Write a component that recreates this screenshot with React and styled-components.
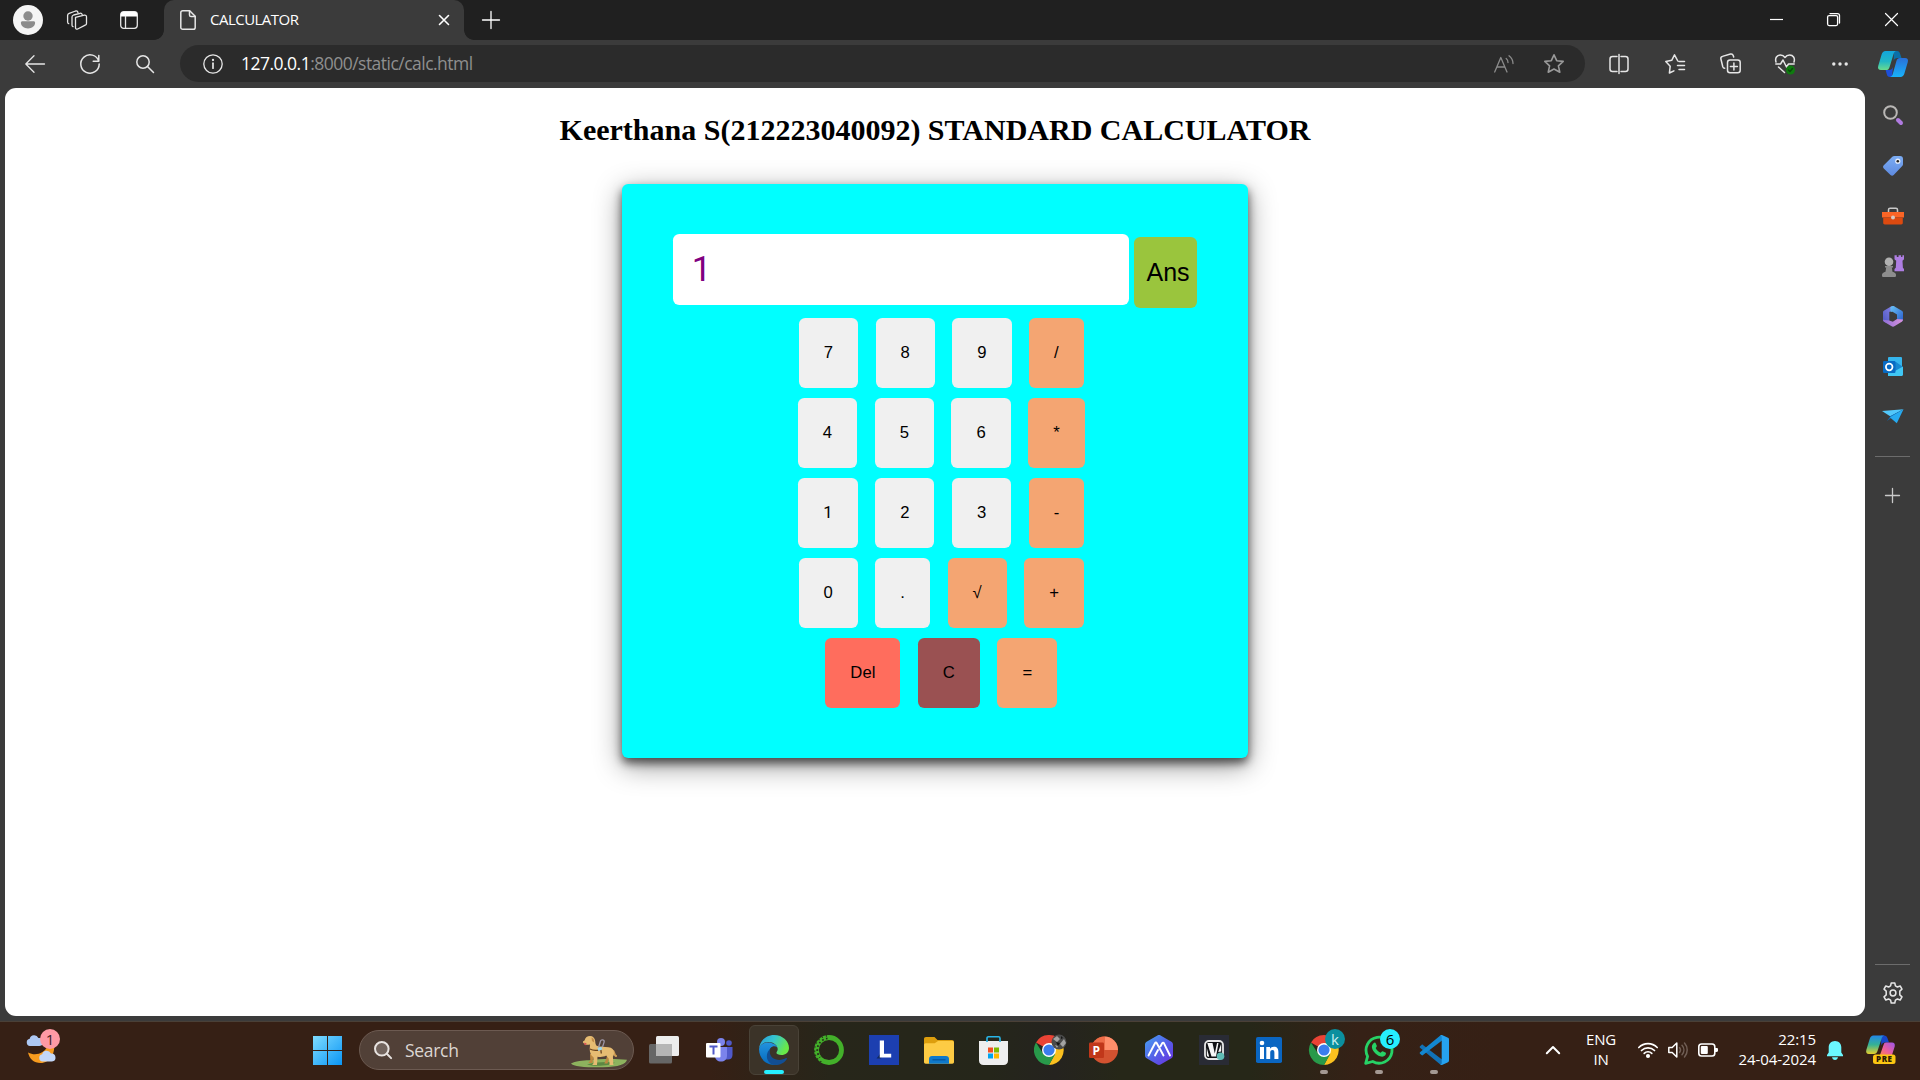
import React from "react";
import styled, { createGlobalStyle } from "styled-components";

const ui = '"Open Sans", "Noto Sans", sans-serif';

const Global = createGlobalStyle`
  html, body { margin: 0; padding: 0; background: #3b3b3b; overflow: hidden; }
  * { box-sizing: border-box; }
  button, input { font-family: "Liberation Sans", Arial, sans-serif; }
`;

const Desktop = styled.div`
  width: 1920px;
  height: 1080px;
  display: flex;
  flex-direction: column;
  background: #3b3b3b;
  font-family: ${ui};
  overflow: hidden;
`;

const Svg = styled.svg`
  display: block;
  flex: none;
  overflow: visible;
`;

const Slot = styled.div`
  width: ${(p) => p.$w}px;
  height: 100%;
  flex: none;
  display: flex;
  align-items: center;
  justify-content: center;
`;

const Spacer = styled.div`
  flex: 1;
`;

/* ---------- window chrome ---------- */

const TitleBar = styled.header`
  height: 40px;
  flex: none;
  display: flex;
  background: #202020;
  padding: 0 0 1px 3px;
`;

const Tab = styled.div`
  width: 300px;
  height: 40px;
  flex: none;
  margin-left: 8px;
  padding: 0 15px 0 16px;
  display: flex;
  align-items: center;
  background: #3b3b3b;
  border-radius: 10px 10px 0 0;
  position: relative;
  &::before,
  &::after {
    content: "";
    position: absolute;
    bottom: 0;
    width: 10px;
    height: 10px;
  }
  &::before {
    left: -10px;
    background: radial-gradient(circle at 0 0, #202020 9.5px, #3b3b3b 10.2px);
  }
  &::after {
    right: -10px;
    background: radial-gradient(circle at 100% 0, #202020 9.5px, #3b3b3b 10.2px);
  }
`;

const TabTitle = styled.span`
  flex: 1;
  margin-left: 14px;
  padding-bottom: 2px;
  font-size: 15px;
  line-height: 20px;
  letter-spacing: -0.52px;
  color: #fff;
`;

const Toolbar = styled.nav`
  height: 48px;
  flex: none;
  display: flex;
  align-items: center;
  padding: 0 0 1px 7px;
`;

const Omnibox = styled.div`
  width: 1405px;
  height: 37px;
  flex: none;
  margin-left: 5px;
  display: flex;
  align-items: center;
  background: #2b2b2b;
  border-radius: 19px;
  padding: 0 6px 0 18px;
`;

const Url = styled.span`
  margin-left: 13px;
  padding-bottom: 2px;
  font-size: 17.5px;
  line-height: 24px;
  letter-spacing: -0.52px;
  color: #8f8f8f;
  b {
    font-weight: 400;
    color: #fff;
  }
`;

/* ---------- page and side rail ---------- */

const Body = styled.div`
  height: 933px;
  flex: none;
  display: flex;
  padding-left: 5px;
`;

const Page = styled.main`
  width: 1860px;
  height: 928px;
  background: #fff;
  border-radius: 11px;
  display: flex;
  flex-direction: column;
  align-items: center;
`;

const Rail = styled.aside`
  width: 55px;
  height: 933px;
  padding-top: 2px;
  display: flex;
  flex-direction: column;
  align-items: center;
`;

const RailItem = styled.div`
  width: 55px;
  height: ${(p) => p.$h || 50.3}px;
  flex: none;
  display: flex;
  align-items: center;
  justify-content: center;
`;

const RailRule = styled.hr`
  width: 35px;
  height: 1px;
  flex: none;
  border: 0;
  margin: ${(p) => p.$m};
  background: #6c6c6c;
`;

const Heading = styled.h2`
  margin: 25px 0 0;
  height: 34px;
  font: bold 30px/34px "Liberation Serif", "Times New Roman", serif;
  color: #000;
  white-space: nowrap;
`;

const Calculator = styled.section`
  width: 626px;
  height: 574px;
  margin-top: 37px;
  padding: 50px;
  border-radius: 6.25px;
  background: #00ffff;
  box-shadow: 0 5px 10px rgba(0, 0, 0, 0.6), 0 7.5px 28px rgba(0, 0, 0, 0.42);
`;

const Display = styled.div`
  height: 79px;
  display: flex;
  padding-left: 1px;
  gap: 5px;
`;

const Screen = styled.input`
  width: 456px;
  height: 71px;
  border: 0;
  outline: 0;
  padding: 0 18.75px;
  border-radius: 6.25px;
  background: #fff;
  color: #800080;
  font-family: Roboto, "Liberation Sans", sans-serif;
  font-size: 35px;
`;

const AnsKey = styled.button`
  width: 63px;
  height: 71px;
  flex: none;
  margin-top: 3px;
  border: 0;
  border-radius: 6.25px;
  padding: 0 0 0 12.5px;
  background: #9ac53d;
  color: #000;
  font-size: 25px;
  text-align: left;
`;

const KeyRow = styled.div`
  display: flex;
  justify-content: center;
  gap: 5px;
  margin-top: ${(p) => (p.$first ? 5 : 10)}px;
`;

const tones = {
  plain: "#f0f0f0",
  op: "#f4a572",
  del: "#ff6d5d",
  clear: "#9a5152",
};

const Key = styled.button`
  height: 70px;
  margin: 0 0 0 12.5px;
  padding: 0 25px;
  border: 0;
  border-radius: 6.25px;
  background: ${(p) => tones[p.$tone]};
  color: #000;
  font-family: ${(p) => (p.$one ? 'Roboto, "Liberation Sans", sans-serif' : '"Liberation Sans", Arial, sans-serif')};
  font-size: 16.67px;
  line-height: 20px;
`;

/* ---------- taskbar ---------- */

const Taskbar = styled.footer`
  height: 59px;
  flex: none;
  display: flex;
  align-items: center;
  padding-bottom: 2px;
  border-top: 1px solid #4a4037;
  background: linear-gradient(
    90deg,
    #362015 0,
    #362015 710px,
    #27261a 830px,
    #25261a 990px,
    #25231f 1055px,
    #262718 1120px,
    #262718 1250px,
    #352116 1360px,
    #362015 1500px
  );
`;

const SearchPill = styled.div`
  width: 275px;
  height: 40px;
  flex: none;
  margin-left: 7px;
  padding: 0 6px 0 14px;
  display: flex;
  align-items: center;
  border: 1px solid #6c5a51;
  border-radius: 20px;
  background: #514037;
`;

const SearchLabel = styled.span`
  flex: 1;
  margin-left: 13px;
  font-size: 17.5px;
  letter-spacing: -0.3px;
  color: #dcd6d2;
`;

const Apps = styled.div`
  display: flex;
  gap: 5px;
  margin-left: 5px;
`;

const AppButton = styled.div`
  width: 50px;
  height: 50px;
  flex: none;
  display: flex;
  align-items: center;
  justify-content: center;
  position: relative;
  border-radius: 6px;
  border: 1px solid ${(p) => (p.$active ? "#494237" : "transparent")};
  background: ${(p) => (p.$active ? "#3b3328" : "transparent")};
  &::after {
    content: "";
    display: ${(p) => (p.$active || p.$open ? "block" : "none")};
    position: absolute;
    bottom: 0;
    width: ${(p) => (p.$active ? 20 : 8)}px;
    height: 4px;
    border-radius: 2px;
    background: ${(p) => (p.$active ? "#26efff" : "#a49993")};
  }
`;

const Badge = styled.span`
  position: absolute;
  left: 25px;
  top: 3px;
  width: 20px;
  height: 20px;
  border-radius: 50%;
  display: flex;
  align-items: center;
  justify-content: center;
  font-size: 15px;
  line-height: 20px;
  color: ${(p) => p.$fg};
  background: ${(p) => p.$bg};
`;

const Weather = styled.div`
  width: 50px;
  height: 50px;
  margin-left: 17px;
  flex: none;
  position: relative;
  display: flex;
  align-items: center;
  justify-content: center;
`;

const WeatherBadge = styled(Badge)`
  left: 23px;
  top: 4px;
`;

const TrayText = styled.div`
  width: ${(p) => p.$w}px;
  flex: none;
  padding-bottom: 3px;
  font-size: 15px;
  line-height: 20px;
  letter-spacing: ${(p) => p.$ls}px;
  text-align: ${(p) => p.$align};
  color: #fff;
  white-space: nowrap;
`;

const line = { fill: "none", stroke: "#e6e6e6", strokeWidth: 1.3, strokeLinecap: "round", strokeLinejoin: "round" };

const Icon = ({ w = 30, h = w, children, ...rest }) => (
  <Svg width={w} height={h} viewBox={`0 0 ${w} ${h}`} {...rest}>
    {children}
  </Svg>
);

const Avatar = () => (
  <Icon w={30}>
    <circle cx="15" cy="15" r="15" fill="#f5f5f5" />
    <circle cx="15" cy="11" r="4.7" fill="#8c8c8c" />
    <path d="M9.5 16.2h11c1 0 1.6.7 1.6 1.6 0 3.4-3.2 5.6-7.1 5.6s-7.1-2.2-7.1-5.6c0-.9.6-1.6 1.6-1.6z" fill="#8c8c8c" />
  </Icon>
);

const Workspaces = () => (
  <Icon w={22} {...line}>
    <path d="M9.5 8.3l8.8-2.1c1.3-.3 2.2.4 2.2 1.5v6.800c0 .8-.5 1.500-1.300 1.700l-7.500 3.800c-1.200.5-2.200 0-2.200-1.200z" />
    <path d="M16.200 5.700c-.2-1.200-1-1.700-2.100-1.400L7.600 6c-1 .3-1.600 1-1.600 2v8.200c0 .8.4 1.300 1 1.500" />
    <path d="M12 3.600C11.600 2 10.800 1.700 9.600 2L3.200 4.400C2.200 4.800 1.600 5.500 1.600 6.500V13c0 .9.4 1.500 1.100 1.700" />
  </Icon>
);

const TabPane = () => (
  <Icon w={18}>
    <rect x=".7" y=".7" width="16.6" height="16.6" rx="3" {...line} />
    <path d="M.7 5.600V3.700a3 3 0 0 1 3-3h10.600a3 3 0 0 1 3 3v1.900z" fill="#fff" />
    <path d="M5.500 5.500v11.800" {...line} />
  </Icon>
);

const DocIcon = () => (
  <Icon w={16} h={20} {...line} strokeWidth="1.5">
    <path d="M2.800.8h6.900l5.500 5.400v11.200c0 1.100-.7 1.800-1.800 1.800H2.800C1.600 19.200.8 18.500.8 17.400V2.600C.8 1.500 1.600.8 2.800.8z" />
    <path d="M9.500 1v3.900c0 1 .6 1.600 1.600 1.600H15" />
  </Icon>
);

const Cross = ({ w, sw = 1.4 }) => (
  <Icon w={w} {...line} stroke="#fff" strokeWidth={sw}>
    <path d={`M.5.5L${w - 0.5} ${w - 0.5}M${w - 0.5}.5L.5 ${w - 0.5}`} />
  </Icon>
);

const Plus = ({ w, color = "#fff" }) => (
  <Icon w={w} {...line} stroke={color} strokeWidth="1.3">
    <path d={`M${w / 2} .5V${w - 0.5}M.5 ${w / 2}H${w - 0.5}`} />
  </Icon>
);

const Gear = () => (
  <Icon w={22} {...line} strokeWidth="1.5">
    <path d="M9.200 1h3.600l.6 2.900 2 1.100 2.800-1 1.800 3.100-2.200 2v3.800l2.200 2-1.800 3.100-2.800-1-2 1.100-.6 2.900H9.200L8.600 18.100l-2-1.100-2.800 1L2 14.900l2.200-2V9.100L2 7.100 3.800 4l2.800 1 2-1.100z" />
    <circle cx="11" cy="11" r="2.900" />
  </Icon>
);

const Copilot = () => (
  <Icon w={30} h={26}>
    <defs>
      <linearGradient id="copilotLeft" x1="0" y1="0" x2="0" y2="1">
        <stop offset="0" stopColor="#12a5dd" />
        <stop offset=".55" stopColor="#22b7c5" />
        <stop offset="1" stopColor="#6bdc8c" />
      </linearGradient>
      <linearGradient id="copilotRight" x1="0" y1="0" x2="0" y2="1">
        <stop offset="0" stopColor="#2a70d8" />
        <stop offset="1" stopColor="#18b2fa" />
      </linearGradient>
    </defs>
    <path d="M16 0h3.200c1.600 0 2.300 1 2.800 2.600L23.500 7h-4c-2 0-3.200.8-3.900 2.900z" fill="#0a6fa8" />
    <path d="M14 26h-2c-2 0-2.700-1-3.200-2.700L7.600 19h3.600c2 0 3.200-1 3.800-2.900z" fill="#1d4fd8" />
    <path d="M7.500 0h11c-1.700.2-2.500 1.500-3 3.200l-4 13c-.6 2-1.700 2.900-3.500 2.900H3C.6 19.100-.5 17.600.2 15L3.600 3.500C4.300 1.200 5.500 0 7.500 0z" fill="url(#copilotLeft)" />
    <path d="M22 7h5c2.400 0 3.500 1.600 2.800 4L26.400 22.500C25.700 24.800 24.500 26 22.500 26H12c1.600-.2 2.300-1.500 2.800-3.200l3.700-13C19.100 7.900 20.200 7 22 7z" fill="url(#copilotRight)" />
  </Icon>
);

const CopilotPre = () => (
  <Icon w={30}>
    <defs>
      <linearGradient id="preLeft" x1="0" y1="0" x2="0" y2="1">
        <stop offset="0" stopColor="#2387e8" />
        <stop offset=".5" stopColor="#35b294" />
        <stop offset="1" stopColor="#e6cf2c" />
      </linearGradient>
      <linearGradient id="preRight" x1="1" y1="0" x2="0" y2="1">
        <stop offset="0" stopColor="#9b55ea" />
        <stop offset=".6" stopColor="#ed5f9b" />
        <stop offset="1" stopColor="#f98452" />
      </linearGradient>
    </defs>
    <path d="M15 .5h3c2 0 3 1 3.600 3L23 7.500h-4c-2 0-3 1-3.700 3z" fill="#1746c8" />
    <path d="M7.500.5h11c-2 .2-2.500 2-3 3.500l-4 12c-.6 2-1.700 3-3.500 3H3c-2.300 0-3.300-1.500-2.700-4L3.700 4C4.400 1.700 5.500.5 7.500.5z" fill="url(#preLeft)" />
    <path d="M20 7.500h6c2.200 0 3.300 1.600 2.700 4L26 20H14l3.500-10c.5-1.700 1.200-2.500 2.500-2.500z" fill="url(#preRight)" />
    <rect x="7" y="19.500" width="22.500" height="9.500" rx="2.500" fill="#fcc612" />
    <text x="18.300" y="27.300" textAnchor="middle" fontFamily="Open Sans, sans-serif" fontWeight="800" fontSize="8" letterSpacing=".5" fill="#2a1a05">PRE</text>
  </Icon>
);

const Chrome = () => (
  <Icon w={30}>
    <path d="M15 15L2 7.500A15 15 0 0 1 28 7.500L15 8z" fill="#ea4335" />
    <path d="M15 8h13A15 15 0 0 1 15 30l6-11z" fill="#fbc01f" />
    <path d="M2 7.500A15 15 0 0 0 15 30l6.200-11L9 18.500z" fill="#28994a" />
    <circle cx="15" cy="15" r="7" fill="#fff" />
    <circle cx="15" cy="15" r="5.600" fill="#3b7ded" />
  </Icon>
);

const SearchTool = () => (
  <Icon w={20}>
    <circle cx="7.500" cy="7.500" r="6.300" fill="none" stroke="#b9b7b5" strokeWidth="2" />
    <path d="M15 15l3 3" stroke="#b07be0" strokeWidth="4" strokeLinecap="round" />
  </Icon>
);

const ShoppingTag = () => (
  <Icon w={20} h={19}>
    <defs>
      <linearGradient id="tag" x1="0" y1="0" x2="0" y2="1"><stop offset="0" stopColor="#7cadf4" /><stop offset="1" stopColor="#5e8ae0" /></linearGradient>
    </defs>
    <path d="M11.500 0H17c2 0 3 1 3 3v5c0 1-.3 1.600-1 2.300l-8.300 8.600c-1 1-2.200 1-3.200 0L.8 12.500c-1-1-1-2.200 0-3.200L9.300.8c.6-.6 1.200-.8 2.200-.8z" fill="url(#tag)" />
    <circle cx="14.800" cy="5.200" r="2.600" fill="#e8eefb" />
    <circle cx="14.800" cy="5.200" r="1.300" fill="#222" />
  </Icon>
);

const Toolbox = () => (
  <Icon w={22} h={17}>
    <path d="M6.500 5V2.800c0-1 .7-1.600 1.600-1.600h5.800c1 0 1.600.6 1.600 1.600V5" fill="none" stroke="#c9c9c9" strokeWidth="1.500" />
    <path d="M0 5h22v5.500H0z" fill="#fa6526" />
    <path d="M1.200 10.500h19.600v5.300c0 1-.6 1.700-1.600 1.700H2.800c-1 0-1.600-.7-1.600-1.700z" fill="#dc4a10" />
    <circle cx="11" cy="10.500" r="2" fill="#d7c9c1" />
  </Icon>
);

const Games = () => (
  <Icon w={22}>
    <path d="M12.500.3h2.300v1.700h1.700V.3h2.600v1.700h1.300V.3H22v4l-1.500 1.500.4 7L22 14v2.200h-9.500V14l1.300-1.200.4-7-1.700-1.500z" fill="#ae7ee2" />
    <circle cx="7" cy="6.800" r="4.300" fill="#b0b0b0" />
    <path d="M3 11h8v1.600H9.800l.7 4.200c2 .6 3.500 1.600 3.500 3v.7c0 1-.6 1.500-1.500 1.500h-11C.6 22 0 21.500 0 20.500v-.7c0-1.400 1.500-2.400 3.500-3l.7-4.200H3z" fill="#8d8d8d" />
  </Icon>
);

const Microsoft365 = () => (
  <Icon w={20} h={21}>
    <defs>
      <linearGradient id="m1" x1="1" y1="0" x2="0" y2="1"><stop offset="0" stopColor="#8d86ea" /><stop offset="1" stopColor="#4c57c0" /></linearGradient>
      <linearGradient id="m2" x1="0" y1="0" x2="1" y2="1"><stop offset="0" stopColor="#68c4f6" /><stop offset="1" stopColor="#2a5ccc" /></linearGradient>
      <linearGradient id="m3" x1="0" y1="0" x2="1" y2="0"><stop offset="0" stopColor="#8f6fd8" /><stop offset="1" stopColor="#d892dc" /></linearGradient>
    </defs>
    <path d="M8 .6C9 0 10.500 0 11.500.5L9 4.500 6.300 6v9.300L3.500 17 1 15.500C.3 15 0 14.500 0 13.500v-7C0 5.500.3 5 1.200 4.500z" fill="url(#m1)" />
    <path d="M9.500 0c.8 0 1.500.1 2 .5l7.300 4.300c.8.5 1.200 1 1.200 2V14l-1 1.500-5-2.800V8.500L9.500 5.800 7.500 6V1z" fill="url(#m2)" />
    <path d="M20 13.500c0 1-.4 1.700-1.200 2.200l-7 4.400c-1.200.7-2.400.7-3.600 0L1 15.700c-.6-.4-1-1.200-1-2l6.300.7 3.500 1.400 4.200-2.800z" fill="url(#m3)" />
  </Icon>
);

const Outlook = () => (
  <Icon w={20} h={19}>
    <rect x="5" width="14" height="10" rx="1" fill="#35b5ed" />
    <path d="M5 9l8-4 7 5v8H5z" fill="#1788d1" />
    <path d="M12 14l8-4.500v8c0 .9-.6 1.500-1.500 1.500H5v-4z" fill="#40c7f4" />
    <rect y="4" width="12.500" height="12" rx="1.200" fill="#086bc4" />
    <circle cx="6.200" cy="10" r="3.300" fill="none" stroke="#fff" strokeWidth="1.700" />
  </Icon>
);

const Drop = () => (
  <Icon w={22} h={15}>
    <path d="M0 2L21.500.3 8.500 7.500z" fill="#52c8fb" />
    <path d="M8.500 7L21.500.3 5 12z" fill="#0f66b0" />
    <path d="M21.500.3l-6.700 14-7-6z" fill="#27aaf0" />
  </Icon>
);

const railIcons = [SearchTool, ShoppingTag, Toolbox, Games, Microsoft365, Outlook, Drop];

const rows = [
  [["7"], ["8"], ["9"], ["/", "op"]],
  [["4"], ["5"], ["6"], ["*", "op"]],
  [["1"], ["2"], ["3"], ["-", "op"]],
  [["0"], ["."], ["√", "op"], ["+", "op"]],
  [["Del", "del"], ["C", "clear"], ["=", "op"]],
];

const TaskView = () => (
  <Icon w={30} h={28}>
    <rect y="8" width="23" height="19.500" rx="1.500" fill="#666" />
    <rect x="7" width="23" height="20" rx="1.500" fill="#ededed" />
    <path d="M7 8h16v12H7z" fill="#b5b5b5" />
  </Icon>
);

const Teams = () => (
  <Icon w={27} h={24}>
    <circle cx="23" cy="5" r="2.800" fill="#5059c9" />
    <circle cx="15" cy="4" r="4" fill="#7b83eb" />
    <path d="M19 9h7.500v8c0 3-2 4.500-4.500 4.500h-3z" fill="#5059c9" />
    <path d="M9 9h12v8.500c0 4-2.600 6-6 6s-6-2-6-6z" fill="#7b83eb" />
    <rect y="5" width="14.500" height="14.500" rx="1" fill="#fff" />
    <path d="M3.500 8.500h8M7.500 8.500v8" stroke="#5059c9" strokeWidth="2" />
  </Icon>
);

const Edge = () => (
  <Icon w={30}>
    <defs>
      <linearGradient id="eg1" x1="0" y1="0" x2="1" y2=".4"><stop offset="0" stopColor="#279ae0" /><stop offset=".5" stopColor="#35c5cf" /><stop offset="1" stopColor="#69e848" /></linearGradient>
      <linearGradient id="eg2" x1="0" y1="0" x2="0" y2="1"><stop offset="0" stopColor="#2293df" /><stop offset="1" stopColor="#0669bd" /></linearGradient>
    </defs>
    <path d="M0 14C.6 6 7 0 15 0c9 0 15 6.500 15 13 0 4.600-3.600 7-7.500 7-3.400 0-5.400-1.200-5-2.600.3-.9 1.200-1.500 1.200-3.400C18.700 10.500 14.500 7 9.500 7 4.500 7 1 10 0 14z" fill="url(#eg1)" />
    <path d="M0 14c.8-4 4.500-6.500 9-6.500 4.800 0 8.500 2.500 9.500 5-1.400-1-3.200-1.400-4.700-1-3 .9-4.300 4.400-3.300 8.500 1 4.500 4.500 8 8 9.500C9.500 31.500 0 25 0 14z" fill="url(#eg2)" />
    <path d="M11.300 14c-1.200 3.500-.2 8.500 5.200 10.300 4 1.300 8 .2 10.500-1.200.7-.4 1.200.2.8.8-2.500 4-6.700 6.100-11.300 6.100-5.500 0-9.500-5-8.500-10.500.4-2.400 1.600-4.300 3.300-5.500z" fill="#124e93" />
  </Icon>
);

const Anaconda = () => (
  <Icon w={30}>
    <circle cx="15" cy="15" r="12.500" fill="none" stroke="#43b02a" strokeWidth="4.800" />
    <path d="M13 .8A14.300 14.300 0 0 0 7.500 27.200" fill="none" stroke="#26271a" strokeWidth="1.300" strokeDasharray="1.200 3" />
    <path d="M13.500 3.400A11.700 11.700 0 0 0 6 22.500" fill="none" stroke="#26271a" strokeWidth="1.800" strokeDasharray="1.600 2.400" />
  </Icon>
);

const LApp = () => (
  <Icon w={30}>
    <path d="M0 0h30v30H0z" fill="#1c3fb0" />
    <path d="M11 6v13l-3.500 4.500H12l1-2z" fill="#122a62" />
    <path d="M10.800 5.500h4.200v13.300h7.200v3.700H10.800z" fill="#fff" />
  </Icon>
);

const Folder = () => (
  <Icon w={30} h={27}>
    <path d="M0 2C0 .7.700 0 2 0h8.500l3 3H28c1.200 0 2 .8 2 2v8H0z" fill="#dd9e0d" />
    <path d="M0 8c0-1 .7-1.700 1.700-1.700h9L14 4h14.300C29.300 4 30 4.700 30 5.700V25c0 1-.7 1.700-1.700 1.700H1.700C.7 26.700 0 26 0 25z" fill="#fdcb44" />
    <path d="M5 26.700V22c0-1.800 1.200-3 3-3h14c1.800 0 3 1.200 3 3v4.700z" fill="#0f79cb" />
    <path d="M8.500 22.800h13" stroke="#07539a" strokeWidth="1.200" />
  </Icon>
);

const Store = () => (
  <Icon w={30} h={29}>
    <path d="M0 5h29v19.500c0 2.800-1.700 4.500-4.500 4.500h-20C1.700 29 0 27.300 0 24.500z" fill="#eee" />
    <path d="M8 6V2.200C8 1.200 8.600.7 9.500.7h10c.9 0 1.500.5 1.500 1.500V6" fill="none" stroke="#29b6e8" strokeWidth="1.600" />
    <path d="M9 11.500h5v5H9z" fill="#f25022" /><path d="M15 11.500h5v5h-5z" fill="#7fba00" />
    <path d="M9 17.500h5v5H9z" fill="#00a4ef" /><path d="M15 17.500h5v5h-5z" fill="#ffb900" />
  </Icon>
);

const ChromePhoto = () => (
  <Icon w={30}>
    <svg width="30" height="30"><Chrome /></svg>
    <circle cx="25" cy="7" r="7.500" fill="#4b4b4b" />
    <path d="M19 4l4-3 3 3-3 3zM26 9l4-5 2 4-3 4zM21 10l3 1-1 2z" fill="#a3a3a3" />
    <path d="M22 7l4 1-2 3zM27 1l2 2-2 1z" fill="#151515" />
  </Icon>
);

const PowerPoint = () => (
  <Icon w={30} h={28}>
    <circle cx="15.500" cy="14" r="13.500" fill="#d35230" />
    <path d="M15.500 .5A13.500 13.500 0 0 1 29 14H15.500z" fill="#ff8f6b" />
    <path d="M15.500 .5V14H2A13.500 13.500 0 0 1 15.500 .5z" fill="#ed6c47" />
    <rect x="0" y="6.500" width="15" height="15.500" rx="1.300" fill="#c0371a" />
    <text x="7.300" y="18.500" textAnchor="middle" fontFamily="Open Sans, sans-serif" fontWeight="700" fontSize="12" fill="#fff">P</text>
  </Icon>
);

const HexApp = () => (
  <Icon w={28} h={30}>
    <defs><linearGradient id="hx" x1="0" y1="0" x2="1" y2="1"><stop offset="0" stopColor="#46a3f2" /><stop offset=".5" stopColor="#5462e8" /><stop offset="1" stopColor="#6a2fe0" /></linearGradient></defs>
    <path d="M12.400.5c1-.6 2.200-.6 3.200 0l10.800 6.200c1 .6 1.600 1.600 1.600 2.800v11c0 1.200-.6 2.200-1.600 2.800l-10.800 6.200c-1 .6-2.200.6-3.200 0L1.600 23.300C.6 22.700 0 21.700 0 20.500v-11c0-1.200.6-2.200 1.600-2.800z" fill="url(#hx)" />
    <path d="M3.500 20.500L10 8.200c.5-.9 1.300-.9 1.800 0L18.500 20.500M10 20.500l3-5.500M15.500 11.300l1.700-3c.5-.9 1.300-.9 1.800 0L25 20.500" fill="none" stroke="#fff" strokeWidth="1.900" strokeLinecap="round" strokeLinejoin="round" />
  </Icon>
);

const VApp = () => (
  <Icon w={30}>
    <path d="M0 0h30v30H0z" fill="#292b35" />
    <rect x="6" y="6" width="18" height="18" rx="4" fill="#101114" stroke="#e7e7e7" strokeWidth="1.800" />
    <path d="M8.300 8h5.200l2.300 10.500L18 8h1.500L17 21.500h-4.500z" fill="#f6f6f6" />
    <path d="M7.800 13l2.400 8.800H9.600c-1.100 0-1.800-.6-1.800-1.700zM22.200 8.500v8l-3 .5z" fill="#f6f6f6" />
    <circle cx="21.500" cy="21.200" r="3.800" fill="#5fbcb5" />
  </Icon>
);

const LinkedIn = () => (
  <Icon w={26}>
    <rect width="26" height="26" rx="1.800" fill="#0a66c2" />
    <circle cx="6" cy="6" r="2.300" fill="#fff" />
    <path d="M4 10h4v12H4zM10.300 10h3.700v1.700c.8-1.300 2-2 3.900-2 3.300 0 4.500 2 4.500 5.600V22h-4v-6c0-1.900-.4-3-1.900-3-1.700 0-2.300 1.200-2.300 3v6h-3.900z" fill="#fff" />
  </Icon>
);

const WhatsApp = () => (
  <Icon w={30}>
    <path d="M1.700 28.300l1.900-7A13 13 0 1 1 8.700 26.500z" fill="none" stroke="#27d266" strokeWidth="2.800" strokeLinejoin="round" />
    <path d="M9.500 8.200c1-.9 1.900-.8 2.300.2l1 2.400c.3.700-.7 1.600-1.100 2.200.8 2 2.800 3.800 5 4.800.6-.5 1.400-1.700 2-1.500l2.700 1.300c.7.400.7 1.100.3 2-1 2-3.300 2.500-5.700 1.700-4-1.300-7.800-5.500-8.100-9-.1-1.600.5-3 1.600-4.100z" fill="#27d266" />
  </Icon>
);

const VSCode = () => (
  <Icon w={30}>
    <path d="M1 11.300l1.500-1.400c.5-.4 1-.4 1.500 0L23 24.500V30c-.8 0-1.500-.3-2-.8L1 12.700c-.5-.5-.5-1 0-1.400z" fill="#1272b7" />
    <path d="M1 18.700l1.500 1.400c.5.400 1 .4 1.500 0L23 5.500V0c-.8 0-1.500.3-2 .8L1 17.300c-.5.500-.5 1 0 1.400z" fill="#1387d0" />
    <path d="M21 .8c.7-.8 1.500-1 2.500-.6L29 2.800c.7.300 1 .8 1 1.600v21.200c0 .8-.3 1.300-1 1.600l-5.500 2.600c-1 .4-1.800.2-2.500-.6.900.4 1.700 0 1.700-1.200V2C22.700.8 21.900.4 21 .8z" fill="#26a2f0" />
  </Icon>
);

const Dog = () => (
  <Icon w={56} h={40}>
    <path d="M0 33.500c4-2.500 12-3.300 18-3.300 12-1.600 27-1.600 38-.4-1 4.200-8 7.300-24 7.500-16 .2-30-.5-32-3.800z" fill="#8db35e" />
    <path d="M16 34.500c10-2.500 20-3 28-1.800-4 2.600-20 4.300-28 1.800z" fill="#5d8843" />
    <path d="M41.500 20.500c2.600 1 1 4.300 3.500 5.500" fill="none" stroke="#d09e55" strokeWidth="2" strokeLinecap="round" />
    <path d="M36.500 24.500l2 2.500-2 6.500h-3.200l1.700-4zM19 24h3.500l-1 9h-4.200l2-2.500z" fill="#bd8940" />
    <path d="M12 12.500c-.4-1 .4-1.600 1.500-2.100C14.300 7.500 16.300 6 19 6c3 0 4.900 2 5.200 5 .1 2 .4 3.600 1.400 4.800 3 1.400 8 1 11.900 1.500 3.500.4 5.500 2.500 5.500 6 0 1.500-.5 2.500-1.100 3.500l.5 8.200h-4l.2-2-1-4.500-2.400-3c-2.500 1.500-5.700 1.700-8.700 1.200L26 35h-4.800l1.600-2.300-.6-5.700c-2.200-1.300-3.500-4.500-3.500-8l.3-4.500c-2.500.6-5.500.5-7-2z" fill="#e6bc72" />
    <path d="M20.500 7.500c2 .5 3 2.500 2.600 5L21 11z" fill="#c08c4a" />
    <path d="M18.800 19c3 1.500 6.500 1.700 9.400.8M29.500 17l.8 6.500" fill="none" stroke="#694420" strokeWidth="1.300" />
    <path d="M27.500 17.500l2-6.500c.8-2 4.200-1.200 3.600 1.100L31.500 17" fill="none" stroke="#9c95a5" strokeWidth="1.300" />
    <path d="M26.500 18l4-1.500.8 3-4 1.500z" fill="#9dd5ea" />
    <path d="M13 12.800l2.500.2-.5 2.300-1.600-.5z" fill="#d85858" />
  </Icon>
);

const cloudShape = "M4 11a3.700 3.700 0 0 1-.3-7.300A4.600 4.600 0 0 1 12.400 3 4 4 0 0 1 13.500 11z";

const WeatherIcon = () => (
  <Icon w={32} h={30}>
    <path d="M28 8c1.500 10-3.500 20-13.500 20C8 28 3.500 24 2 17.500c5 2.500 10 2.300 14.500-.5C20.500 14.500 22 11 22 8z" fill="#f79b1e" />
    <path d={cloudShape} fill="#adc8f3" />
    <path d={cloudShape} fill="#c3d7f8" transform="translate(12.500 15.500)" />
  </Icon>
);

export default function App() {
  return (
    <Desktop>
      <Global />
      <TitleBar>
        <Slot $w={50}><Avatar /></Slot>
        <Slot $w={48}><Workspaces /></Slot>
        <Slot $w={55}><TabPane /></Slot>
        <Tab>
          <DocIcon />
          <TabTitle>CALCULATOR</TabTitle>
          <Cross w={10} sw={1.6} />
        </Tab>
        <Slot $w={53}><Plus w={18} /></Slot>
        <Spacer />
        <Slot $w={58}><Icon w={13}><path d="M0 6.500h13" stroke="#fff" strokeWidth="1.2" /></Icon></Slot>
        <Slot $w={57}>
          <Icon w={13} {...line} stroke="#fff">
            <rect x=".6" y="2.600" width="10" height="10" rx="1.500" />
            <path d="M3 .6h7.500c1.300 0 2 .8 2 2V10" />
          </Icon>
        </Slot>
        <Slot $w={58}><Cross w={13} sw={1.2} /></Slot>
      </TitleBar>

      <Toolbar>
        <Slot $w={56}><Icon w={20} h={18} {...line}><path d="M19.500 9H.8M9 .8L.8 9 9 17.200" /></Icon></Slot>
        <Slot $w={54}>
          <Icon w={20} {...line} strokeWidth="1.5">
            <path d="M18.800 7.300A9.200 9.200 0 1 0 19.200 10M18.800 1.500v5.800h-5.600" />
          </Icon>
        </Slot>
        <Slot $w={56}><Icon w={18} {...line} strokeWidth="1.5"><circle cx="7" cy="7" r="6.200" /><path d="M11.500 11.500l6 6" /></Icon></Slot>
        <Slot $w={2} />
        <Omnibox>
          <Slot $w={30}>
            <Icon w={20} {...line}><circle cx="10" cy="10" r="9.200" /><path d="M10 9.200v5" strokeWidth="1.7" /><circle cx="10" cy="6" r=".5" fill="#fff" /></Icon>
          </Slot>
          <Url><b>127.0.0.1</b>:8000/static/calc.html</Url>
          <Spacer />
          <Slot $w={50}>
            <Icon w={20} h={18} {...line} stroke="#8b8b8b">
              <path d="M.7 17L6.800 2.500 13 17M2.800 12h8M12.200 3.500c1.300 1 1.800 2.300 1.800 4M15 .8c2.700 2.200 4 4.500 4 7.700" />
            </Icon>
          </Slot>
          <Slot $w={50}><Icon w={20} h={19} {...line} stroke="#9a9a9a" strokeWidth="1.6"><path d="M10 .8l2.700 5.900 6.500.7-4.800 4.400 1.400 6.400-5.800-3.200-5.800 3.200 1.400-6.400L.8 7.400l6.500-.7z" /></Icon></Slot>
        </Omnibox>
        <Slot $w={68}>
          <Icon w={20} {...line} strokeWidth="1.5"><path d="M8 2.500H3.500C2 2.500 1 3.500 1 5v10c0 1.500 1 2.500 2.500 2.500H8M12 2.500h4.500C18 2.500 19 3.500 19 5v10c0 1.500-1 2.500-2.500 2.500H12M10 .5v19" /></Icon>
        </Slot>
        <Slot $w={43}>
          <Icon w={20} {...line} strokeWidth="1.5"><path d="M12.800 7L9.500.8 6.700 6.300.8 7.500l4.400 4.700-.8 6.800 4.500-2.200M14 7.500h5.500M12.500 11.500h7M14 15.500h5.500" /></Icon>
        </Slot>
        <Slot $w={68}>
          <Icon w={21} {...line} strokeWidth="1.5"><rect x="7.500" y="7" width="12.700" height="12.700" rx="2.500" /><path d="M13.900 10v7M10.400 13.500h7M4.700 15.300c-1 0-1.600-.5-1.900-1.500L.9 6c-.3-1.300.3-2.300 1.500-2.600L10.500 1c1.300-.3 2.300.3 2.700 1.500l.5 1.500" /></Icon>
        </Slot>
        <Slot $w={42}>
          <Icon w={20} {...line} strokeWidth="1.5">
            <path d="M1 8C-.3 4 2 1 5.300 1 7.500 1 9 2 10 3.500 11 2 12.500 1 14.700 1 18 1 20.300 4 19 8M.8 10h4.700l2.500-4 3.500 7 2-3h5.700M3.500 13l6 5.500" />
            <circle cx="15.500" cy="16" r="4.500" fill="#0f7b0f" stroke="none" /><path d="M13.500 16l1.500 1.500 2.500-3" stroke="#0a4a0a" />
          </Icon>
        </Slot>
        <Slot $w={68}><Icon w={16} h={4} fill="#e6e6e6"><circle cx="1.800" cy="2" r="1.700" /><circle cx="8" cy="2" r="1.700" /><circle cx="14.200" cy="2" r="1.700" /></Icon></Slot>
        <Slot $w={38}><Copilot /></Slot>
      </Toolbar>

      <Body>
        <Page>
          <Heading>Keerthana S(212223040092) STANDARD CALCULATOR</Heading>
          <Calculator>
            <Display>
              <Screen readOnly value="1" />
              <AnsKey>Ans</AnsKey>
            </Display>
            {rows.map((row, i) => (
              <KeyRow key={i} $first={i === 0}>
                {row.map(([label, tone = "plain"]) => (
                  <Key key={label} $tone={tone} $one={label === "1"}>{label}</Key>
                ))}
              </KeyRow>
            ))}
          </Calculator>
        </Page>
        <Rail>
          {railIcons.map((RailIcon, i) => <RailItem key={i}><RailIcon /></RailItem>)}
          <RailRule $m="14px 0 13px" />
          <RailItem><Plus w={15} color="#c9c9c9" /></RailItem>
          <Spacer />
          <RailRule $m="0" />
          <RailItem $h={56}><Gear /></RailItem>
        </Rail>
      </Body>

      <Taskbar>
        <Weather>
          <WeatherIcon />
          <WeatherBadge $bg="#ff9aa5" $fg="#3d2025">1</WeatherBadge>
        </Weather>
        <Slot $w={235} />
        <Slot $w={50}>
          <Icon w={29}>
            <defs><linearGradient id="win" x1="0" y1="0" x2="1" y2="1"><stop offset="0" stopColor="#7fdcff" /><stop offset="1" stopColor="#0a95f5" /></linearGradient></defs>
            <path d="M0 0h14v14H0zM15 0h14v14H15zM0 15h14v14H0zM15 15h14v14H15z" fill="url(#win)" />
          </Icon>
        </Slot>
        <SearchPill>
          <Icon w={18} {...line} strokeWidth="2" stroke="#e8e3e0"><circle cx="7.800" cy="7.800" r="6.800" fill="#72645d" /><path d="M12.800 12.800l4.300 4.300" /></Icon>
          <SearchLabel>Search</SearchLabel>
          <Dog />
        </SearchPill>
        <Apps>
          <AppButton><TaskView /></AppButton>
          <AppButton><Teams /></AppButton>
          <AppButton $active><Edge /></AppButton>
          <AppButton><Anaconda /></AppButton>
          <AppButton><LApp /></AppButton>
          <AppButton><Folder /></AppButton>
          <AppButton><Store /></AppButton>
          <AppButton><ChromePhoto /></AppButton>
          <AppButton><PowerPoint /></AppButton>
          <AppButton><HexApp /></AppButton>
          <AppButton><VApp /></AppButton>
          <AppButton><LinkedIn /></AppButton>
          <AppButton $open><Chrome /><Badge $bg="#0b8f9e" $fg="#cdeef0">k</Badge></AppButton>
          <AppButton $open><WhatsApp /><Badge $bg="#26efff" $fg="#000">6</Badge></AppButton>
          <AppButton $open><VSCode /></AppButton>
        </Apps>
        <Spacer />
        <Slot $w={26}><Icon w={14} h={8} {...line} strokeWidth="2" stroke="#fff"><path d="M.8 7.200L7 1l6.200 6.200" /></Icon></Slot>
        <TrayText $w={70} $align="center" $ls={-0.2}>ENG<br />IN</TrayText>
        <Slot $w={24}>
          <Icon w={20} h={16} {...line} strokeWidth="1.7" stroke="#fff">
            <path d="M.8 5.500a13 13 0 0 1 18.400 0M3.500 8.500a9.200 9.200 0 0 1 13 0M6.200 11.300a5.400 5.400 0 0 1 7.600 0" /><circle cx="10" cy="14" r="1.200" fill="#fff" />
          </Icon>
        </Slot>
        <Slot $w={36}>
          <Icon w={20} h={16} {...line} strokeWidth="1.5" stroke="#fff">
            <path d="M.8 5.500h3.400L8.800 1v14l-4.600-4.500H.8z" />
            <path d="M11.500 5.500c1.200 1.500 1.200 3.500 0 5M14 3.300c2.500 2.800 2.500 6.600 0 9.400M16.500 1c3.600 4 3.600 10 0 14" stroke="#705e55" />
          </Icon>
        </Slot>
        <Slot $w={24}>
          <Icon w={20} h={14}>
            <rect x=".8" y="1" width="16" height="12" rx="2.700" {...line} strokeWidth="1.600" stroke="#fff" />
            <rect x="2.800" y="3" width="7" height="8" rx="1" fill="#fff" /><path d="M17 5h1.500c1 0 1.500.5 1.500 1.200v1.600c0 .7-.5 1.200-1.500 1.200H17z" fill="#fff" />
          </Icon>
        </Slot>
        <TrayText $w={96} $align="right" $ls={-0.08}>22:15<br />24-04-2024</TrayText>
        <Slot $w={38}>
          <Icon w={16} h={19} fill="#6bf8ff"><path d="M8 0c3.800 0 6.300 2.800 6.300 6.300v5.200L16 14v1.300H0V14l1.700-2.500V6.300C1.700 2.800 4.200 0 8 0zM5 16.300h6c-.3 1.600-1.400 2.700-3 2.700s-2.700-1.100-3-2.700z" /></Icon>
        </Slot>
        <Slot $w={53}><CopilotPre /></Slot>
        <Slot $w={13} />
      </Taskbar>
    </Desktop>
  );
}
